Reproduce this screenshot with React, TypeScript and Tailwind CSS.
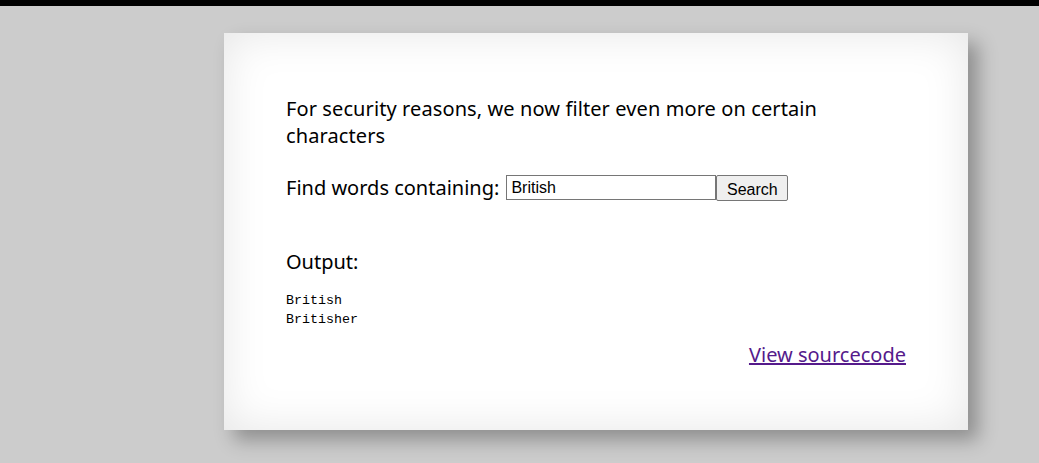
export default function App() {
  return (
    <div className="min-h-[463px] bg-[#cccccc] border-t-[6px] border-black">
      <div className="pt-[27px] pl-[224px]">
        <div className="w-[744px] h-[397px] bg-white px-[62px] pt-[62px] shadow-[10px_10px_18px_rgba(0,0,0,0.3),inset_0_0_45px_rgba(0,0,0,0.1)] font-['Noto_Sans',sans-serif] text-[20px] leading-[27px] text-black">
          <p className="tracking-[0.1px]">For security reasons, we now filter even more on certain characters</p>
          <form className="mt-[25px] flex items-center" onSubmit={(e) => e.preventDefault()}>
            <label className="mr-[7px]">Find words containing:</label>
            <input
              defaultValue="British"
              className="w-[210px] h-[25px] border border-[#767676] px-[4px] text-[16px] font-['Liberation_Sans',sans-serif] outline-none"
            />
            <button
              type="submit"
              className="w-[72px] h-[26px] border border-[#767676] rounded-[2px] bg-[#efefef] text-[16px] font-['Liberation_Sans',sans-serif]"
            >
              Search
            </button>
          </form>
          <h3 className="mt-[47px]">Output:</h3>
          <pre className="mt-[16px] font-['Liberation_Mono',monospace] text-[13.33px] leading-[19px]">
            British{'\n'}Britisher
          </pre>
          <div className="mt-[12px] text-right">
            <a href="#" className="text-[#551a8b] underline">View sourcecode</a>
          </div>
        </div>
      </div>
    </div>
  );
}
